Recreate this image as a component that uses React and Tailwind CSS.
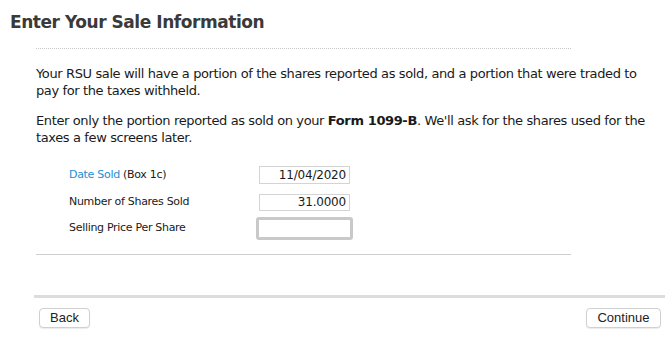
export default function App() {
  return (
    <div className="w-[672px] h-[364px] bg-white overflow-hidden font-['DejaVu_Sans',sans-serif] text-[#1a1a1a]">
      <h1 className="pl-[10px] pt-[11px] text-[17px] leading-[22px] font-bold tracking-[-0.45px] text-[#3a3a3a]">
        Enter Your Sale Information
      </h1>

      <div className="ml-[36px] mt-[15px] w-[535px] border-t border-dotted border-[#c8c8c8]" />

      <div className="ml-[36px] w-[622px] mt-[16px] text-[13px] leading-[17px] tracking-[-0.38px]">
        <p>
          Your RSU sale will have a portion of the shares reported as sold, and a portion that were traded to pay for the taxes withheld.
        </p>
        <p className="mt-[13px]">
          Enter only the portion reported as sold on your <span className="font-bold">Form 1099-B</span>. We'll ask for the shares used for the taxes a few screens later.
        </p>
      </div>

      <div className="ml-[69px] mt-[20px] flex flex-col text-[11px] tracking-[-0.3px]">
        <div className="flex items-center h-[18px]">
          <div className="w-[190px]">
            <span className="text-[#1b8fd2]">Date Sold</span> (Box 1c)
          </div>
          <div className="w-[91px] h-[18px] border border-[#d4d4d4] text-right pr-[3px] text-[12px] leading-[16px] tracking-[-0.2px]">
            11/04/2020
          </div>
        </div>
        <div className="flex items-center h-[17px] mt-[10px]">
          <div className="w-[190px]">Number of Shares Sold</div>
          <div className="w-[91px] h-[17px] border border-[#d4d4d4] text-right pr-[3px] text-[12px] leading-[15px] tracking-[-0.2px]">
            31.0000
          </div>
        </div>
        <div className="flex items-center h-[23px] mt-[6px]">
          <div className="w-[187px]">Selling Price Per Share</div>
          <div className="w-[97px] h-[23px] border-[3px] border-[#c9c9c9] rounded-[3px]" />
        </div>
      </div>

      <div className="ml-[36px] mt-[14px] w-[535px] border-t border-[#cfcfcf]" />

      <div className="ml-[34px] mt-[40px] w-[631px] h-[3px] bg-[#dcdcdc]" />

      <div className="flex justify-between pl-[39px] pr-[11px] mt-[10px] font-['Liberation_Sans',sans-serif] text-[13px]">
        <button className="w-[51px] h-[20px] rounded-[4px] border border-[#d0d0d0] bg-white text-[#222] leading-[18px] shadow-[0_1px_1px_rgba(0,0,0,0.08)]">
          Back
        </button>
        <button className="w-[75px] h-[20px] rounded-[4px] border border-[#d0d0d0] bg-white text-[#222] leading-[18px] shadow-[0_1px_1px_rgba(0,0,0,0.08)]">
          Continue
        </button>
      </div>
    </div>
  );
}
